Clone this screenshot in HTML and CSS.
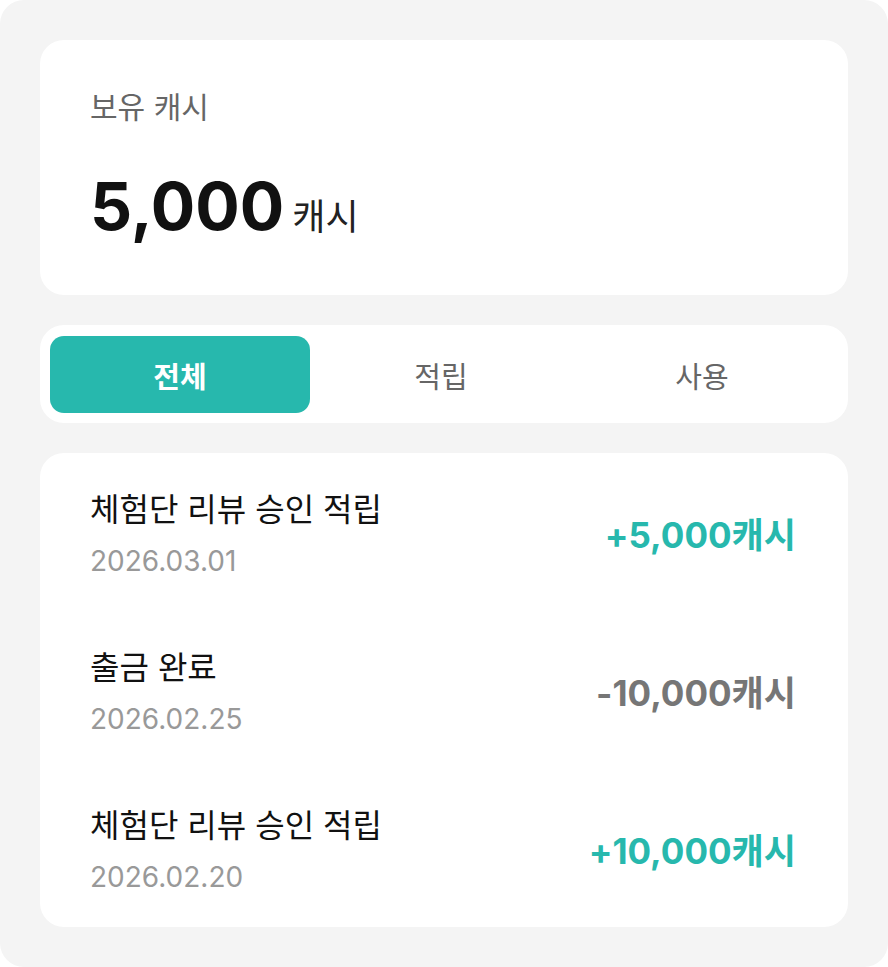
FILE: index.html
```html
<!DOCTYPE html>
<html>
<head>
    <link rel="stylesheet" href="styles.css">
</head>
<body>
    <div class="frame">
        <div class="card balance">
            <div class="balance-label">보유 캐시</div>
            <div class="balance-value">
                <span class="balance-num">5,000</span>
                <span class="balance-unit">캐시</span>
            </div>
        </div>

        <div class="card tabs">
            <div class="tab active">전체</div>
            <div class="tab">적립</div>
            <div class="tab">사용</div>
        </div>

        <div class="card history">
            <div class="row">
                <div class="row-info">
                    <div class="row-title">체험단 리뷰 승인 적립</div>
                    <div class="row-date">2026.03.01</div>
                </div>
                <div class="amount plus">+5,000캐시</div>
            </div>
            <div class="row">
                <div class="row-info">
                    <div class="row-title">출금 완료</div>
                    <div class="row-date">2026.02.25</div>
                </div>
                <div class="amount minus">-10,000캐시</div>
            </div>
            <div class="row">
                <div class="row-info">
                    <div class="row-title">체험단 리뷰 승인 적립</div>
                    <div class="row-date">2026.02.20</div>
                </div>
                <div class="amount plus">+10,000캐시</div>
            </div>
        </div>
    </div>
</body>
</html>
```

FILE: styles.css
```css
body {
    margin: 0;
    background: #ffffff;
    font-family: Inter, "Noto Sans CJK KR", sans-serif;
}

.frame {
    width: 888px;
    height: 967px;
    box-sizing: border-box;
    background: #f4f4f4;
    border-radius: 24px;
    padding: 40px;
    display: flex;
    flex-direction: column;
    gap: 30px;
}

.card {
    background: #ffffff;
    border-radius: 24px;
}

.balance {
    height: 256px;
    box-sizing: border-box;
    padding: 52px 50px 0;
}

.balance-label {
    font-size: 30px;
    line-height: 30px;
    color: #666;
}

.balance-value {
    display: flex;
    align-items: baseline;
    gap: 8px;
    margin-top: 51px;
}

.balance-num {
    font-size: 66px;
    font-weight: 700;
    color: #111;
    line-height: 1;
}

.balance-unit {
    font-size: 36px;
    color: #222;
}

.tabs {
    height: 98px;
    box-sizing: border-box;
    padding: 11px 10px 10px;
    display: grid;
    grid-template-columns: 260px 260px 260px;
    gap: 1px;
}

.tab {
    display: flex;
    align-items: center;
    justify-content: center;
    font-size: 29px;
    color: #666;
    border-radius: 14px;
}

.tab.active {
    background: #27b8ad;
    color: #fff;
    font-weight: 700;
}

.history {
    height: 474px;
    box-sizing: border-box;
    padding: 0 52px 0 50px;
}

.row {
    display: flex;
    align-items: center;
    justify-content: space-between;
    height: 158px;
}

.row-info {
    margin-top: 7px;
}

.row-title {
    font-size: 32px;
    color: #111;
    line-height: 36px;
}

.row-date {
    font-size: 28px;
    line-height: 36px;
    color: #999;
    margin-top: 15px;
}

.amount {
    font-size: 35px;
    font-weight: 700;
}

.amount.plus {
    color: #27b8ad;
}

.amount.minus {
    color: #767676;
}
```
